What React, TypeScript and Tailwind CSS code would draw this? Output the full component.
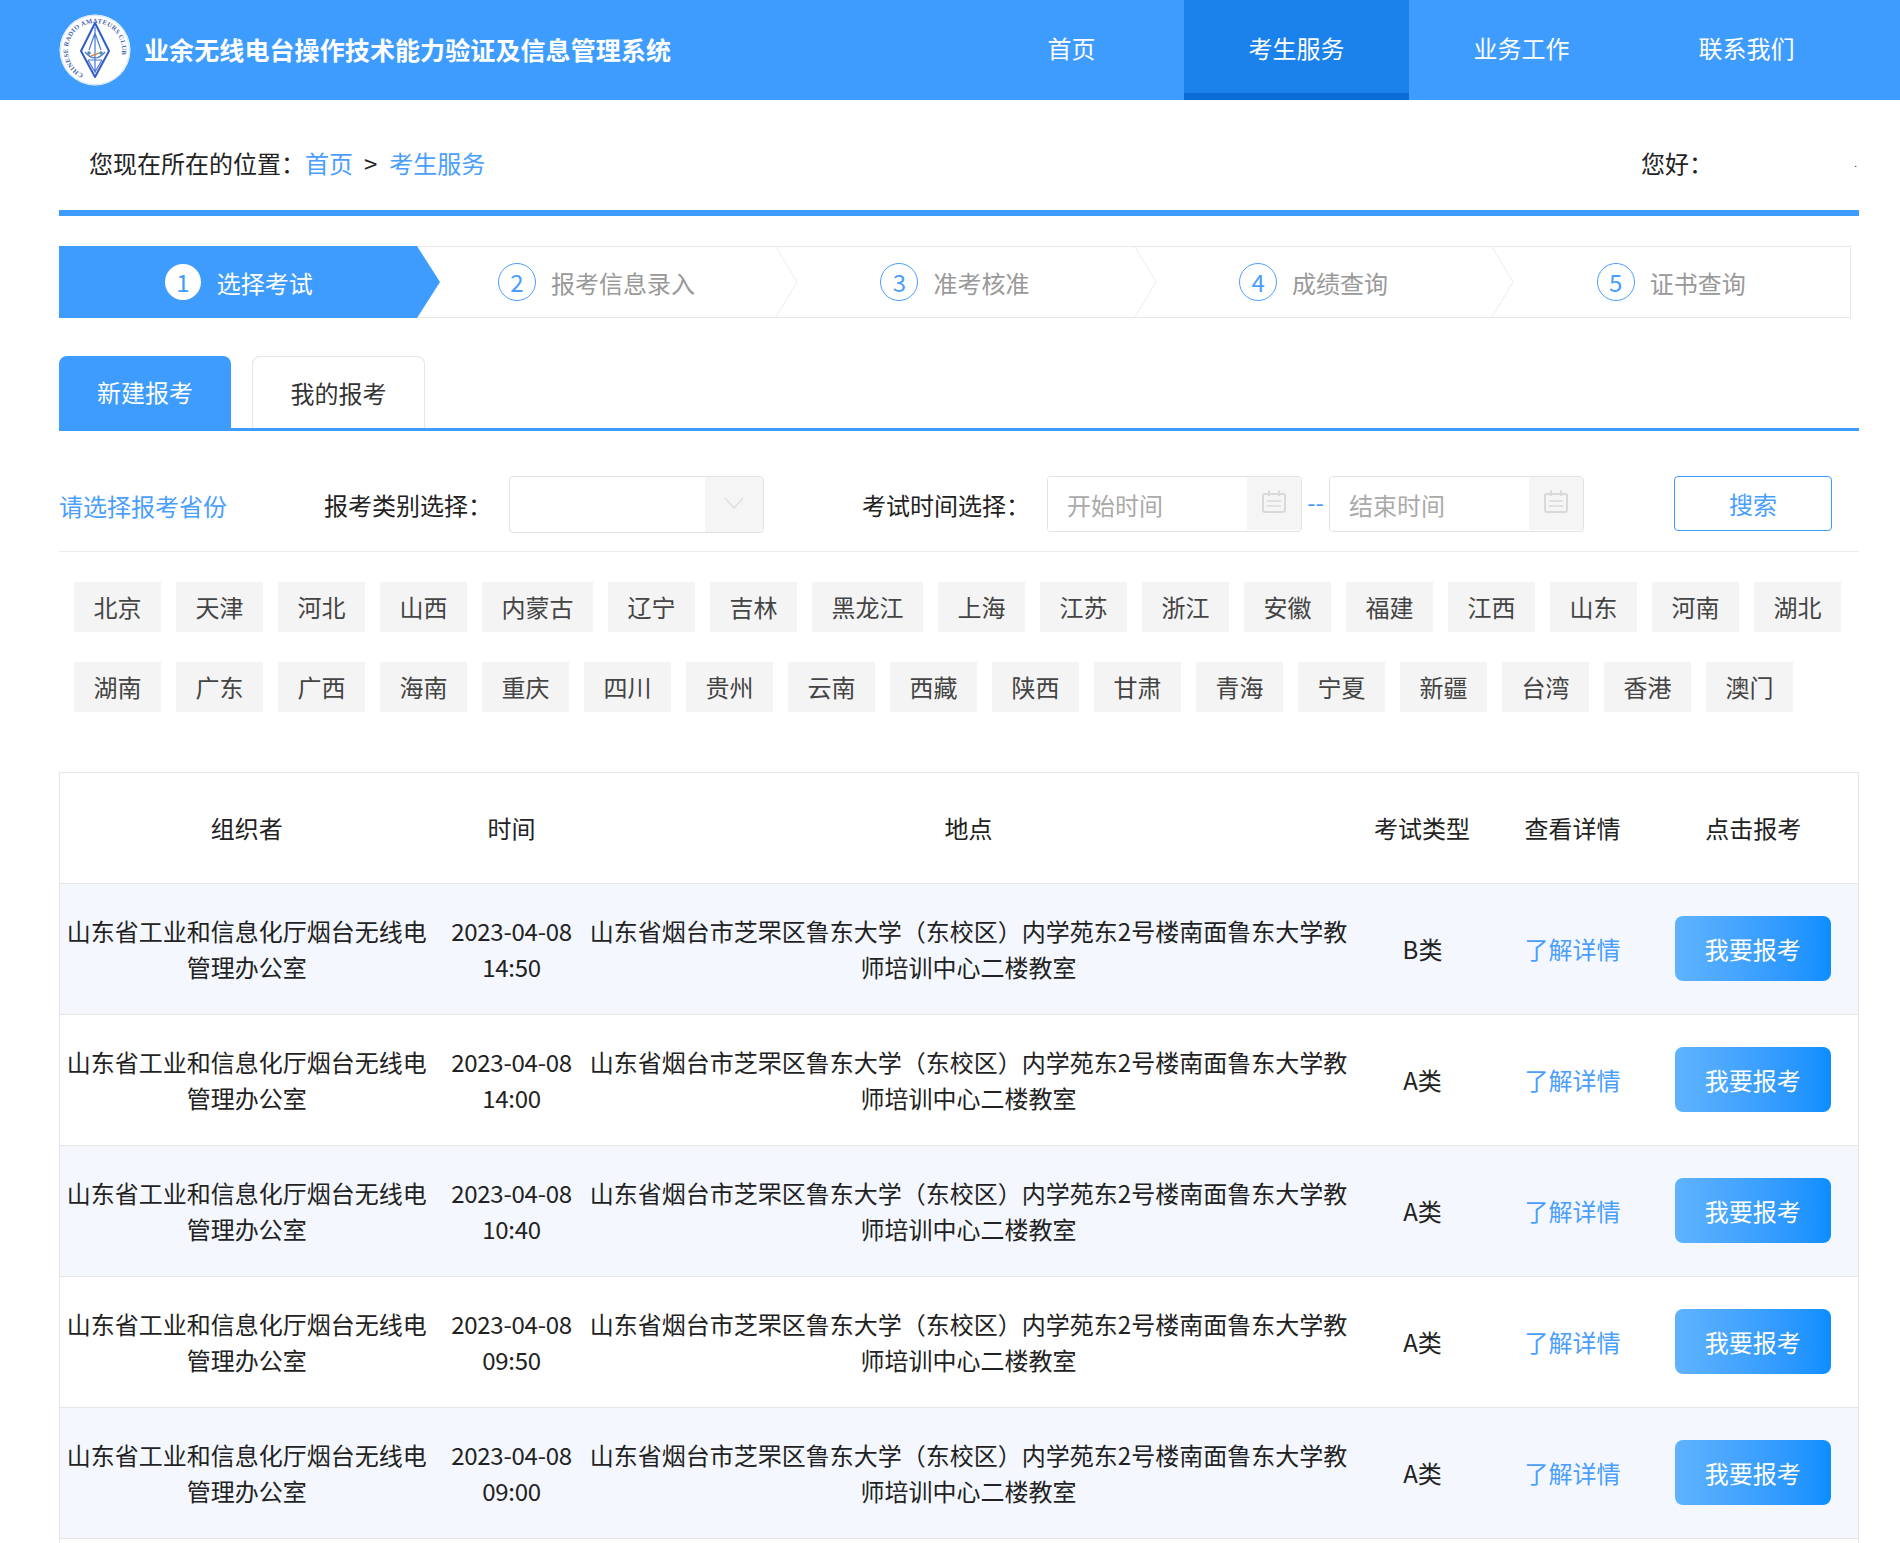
import React from 'react';

const steps = ['选择考试', '报考信息录入', '准考核准', '成绩查询', '证书查询'];

const provinces = [
  '北京', '天津', '河北', '山西', '内蒙古', '辽宁', '吉林', '黑龙江', '上海', '江苏', '浙江', '安徽', '福建', '江西', '山东', '河南', '湖北',
  '湖南', '广东', '广西', '海南', '重庆', '四川', '贵州', '云南', '西藏', '陕西', '甘肃', '青海', '宁夏', '新疆', '台湾', '香港', '澳门',
];

const exams = [
  { date: '2023-04-08', time: '14:50', type: 'B类' },
  { date: '2023-04-08', time: '14:00', type: 'A类' },
  { date: '2023-04-08', time: '10:40', type: 'A类' },
  { date: '2023-04-08', time: '09:50', type: 'A类' },
  { date: '2023-04-08', time: '09:00', type: 'A类' },
];

const Logo = () => (
  <svg width="72" height="72" viewBox="0 0 72 72" className="shrink-0">
    <circle cx="36" cy="36" r="35.5" fill="#ffffff" />
    <circle cx="36" cy="36" r="34.6" fill="none" stroke="#c4dcf7" strokeWidth="0.8" />
    <defs>
      <path id="ring" d="M 36 63 a 27 27 0 1 1 0 -54 a 27 27 0 1 1 0 54" />
    </defs>
    <text fontSize="6.6" fontWeight="700" fill="#3f64ad" fontFamily="'Liberation Serif', serif" letterSpacing="0.3">
      <textPath href="#ring" startOffset="7%">CHINESE RADIO AMATEURS CLUB</textPath>
    </text>
    <path d="M36 9 L50 37 L36 63 L22 37 Z" fill="#ffffff" stroke="#2f5cc8" strokeWidth="2" strokeLinejoin="round" />
    <path d="M36 13 V59 M30 36 L36 19 L42 36 M26 38 Q36 50 46 38 M29 46 L36 58 L43 46 M29 46 H43" fill="none" stroke="#4a78d8" strokeWidth="1.2" />
    <circle cx="30" cy="39" r="1.8" fill="#3f8fb8" />
    <circle cx="42" cy="39" r="1.8" fill="#3f8fb8" />
    <path d="M32 42 L40 39" stroke="#e08a4a" strokeWidth="1.6" />
  </svg>
);

const CalendarIcon = () => (
  <svg width="24" height="23" viewBox="0 0 24 23" fill="none" stroke="#d9d9d9" strokeWidth="2">
    <rect x="1" y="4" width="22" height="18" rx="2" />
    <path d="M7 0.5V6M17 0.5V6" />
    <path d="M5 11H19M5 16H19" strokeWidth="1.5" />
  </svg>
);

const DateInput = ({ placeholder }: { placeholder: string }) => (
  <div className="flex h-[56px] w-[255px] overflow-hidden rounded-[4px] border border-[#e2e2e2] bg-white">
    <input
      readOnly
      placeholder={placeholder}
      className="w-[199px] bg-white pl-[19px] pt-[1px] text-[24px] outline-none placeholder:text-[#aaaaaa]"
    />
    <div className="flex h-[53px] flex-1 justify-center bg-[#f5f5f5] pt-[13px]">
      <CalendarIcon />
    </div>
  </div>
);

const App: React.FC = () => {
  return (
    <div className="h-[1543px] overflow-hidden bg-white text-[24px] leading-[36px] text-[#222222] [font-family:'Noto_Sans_CJK_SC',sans-serif]">
      {/* Header */}
      <header className="h-[100px] bg-[#3e9cff]">
        <div className="ml-[59px] flex h-full w-[1800px] items-center justify-between">
          <div className="flex items-center">
            <Logo />
            <span className="ml-[13px] whitespace-nowrap pb-[2px] text-[25px] font-bold tracking-[0.1px] text-white">
              业余无线电台操作技术能力验证及信息管理系统
            </span>
          </div>
          <nav className="flex h-full">
            {['首页', '考生服务', '业务工作', '联系我们'].map(item => (
              <a
                key={item}
                className={
                  item === '考生服务'
                    ? 'flex w-[225px] items-center justify-center border-b-[7px] border-[#0a6cd6] bg-[#1a82ea] pt-[2px] text-white'
                    : 'flex w-[225px] items-center justify-center pb-[5px] text-white'
                }
              >
                {item}
              </a>
            ))}
          </nav>
        </div>
      </header>

      <main className="ml-[59px] w-[1800px]">
        {/* Breadcrumb */}
        <div className="flex h-[116px] items-center justify-between border-b-[6px] border-[#3e9cff] pl-[30px] pr-[2px] pt-[16px]">
          <div className="flex items-center">
            <span>您现在所在的位置：</span>
            <a className="text-[#4a9eff]">首页</a>
            <span className="mx-[11px]">&gt;</span>
            <a className="ml-[1px] text-[#4a9eff]">考生服务</a>
          </div>
          <div className="flex w-[216px] items-center justify-between">
            <span>您好：</span>
            <span className="text-[10px]">.</span>
          </div>
        </div>

        {/* Steps */}
        <div className="mt-[30px] flex h-[72px] w-[1792px] border-y border-[#e8e8e8]">
          {steps.map((step, index) => (
            <div
              key={step}
              className={
                index === 4
                  ? 'relative flex flex-1 items-center justify-center border-r border-[#e8e8e8]'
                  : index === 0
                    ? 'relative flex flex-1 items-center justify-center pl-[1px]'
                    : index === 3
                      ? 'relative flex flex-1 items-center justify-center'
                      : 'relative flex flex-1 items-center justify-center pr-[1px]'
              }
            >
              {index === 0 ? (
                <div className="absolute -inset-y-px left-0 w-[381px] bg-[#3e9cff] [clip-path:polygon(0_0,358px_0,381px_50%,358px_100%,0_100%)]" />
              ) : null}
              {index > 0 && index < 4 ? (
                <svg width="23" height="72" viewBox="0 0 23 72" fill="none" className="absolute -top-px left-full z-10 -ml-px">
                  <path d="M0.5 0 L22 36 L0.5 72" stroke="#ececec" strokeWidth="1" />
                </svg>
              ) : null}
              <span
                className={
                  index === 0
                    ? 'relative flex h-[36px] w-[36px] items-center justify-center rounded-full bg-white text-[#3e9cff]'
                    : 'relative flex h-[38px] w-[38px] items-center justify-center rounded-full border border-[#4a9eff] text-[#4a9eff]'
                }
              >
                {index + 1}
              </span>
              <span className={index === 0 ? 'relative ml-[16px] pt-[2px] text-white' : 'relative ml-[15px] pt-[2px] text-[#999999]'}>{step}</span>
            </div>
          ))}
        </div>

        {/* Tabs */}
        <div className="mt-[38px] flex gap-[21px] border-b-[3px] border-[#3e9cff]">
          <button className="h-[72px] w-[172px] rounded-t-[8px] bg-[#3e9cff] text-white">新建报考</button>
          <button className="h-[72px] w-[173px] rounded-t-[8px] border border-b-0 border-[#e5e5e5] bg-white text-[#333333]">
            我的报考
          </button>
        </div>

        {/* Filters */}
        <div className="mt-[45px] flex items-start border-b border-[#ececec] pb-[18px]">
          <a className="mt-[12px] w-[168px] text-[#4a9eff]">请选择报考省份</a>
          <span className="ml-[97px] mt-[11px] w-[168px]">报考类别选择：</span>
          <div className="ml-[17px] flex h-[57px] w-[255px] overflow-hidden rounded-[4px] border border-[#e2e2e2]">
            <div className="flex-1" />
            <div className="flex w-[58px] items-center justify-center bg-[#f5f5f5] pb-[4px]">
              <svg width="20" height="12" viewBox="0 0 20 12" fill="none" stroke="#dddddd" strokeWidth="1.2">
                <path d="M1 1 L10 11 L19 1" />
              </svg>
            </div>
          </div>
          <span className="ml-[98px] mt-[11px] w-[168px]">考试时间选择：</span>
          <div className="ml-[17px]">
            <DateInput placeholder="开始时间" />
          </div>
          <span className="w-[27px] pt-[8px] text-center text-[24px] text-[#3e9cff]">--</span>
          <DateInput placeholder="结束时间" />
          <button className="ml-[90px] h-[55px] w-[158px] rounded-[4px] border border-[#3e9cff] text-[#4a9eff]">搜索</button>
        </div>

        {/* Provinces */}
        <div className="mt-[30px] flex flex-wrap gap-x-[15px] gap-y-[30px] pl-[15px]">
          {provinces.map(name => (
            <a key={name} className="flex h-[50px] items-center bg-[#f4f4f4] px-[19.5px] text-[#444444]">
              {name}
            </a>
          ))}
        </div>

        {/* Exams */}
        <table className="mt-[60px] w-full table-fixed border-collapse border border-[#e5e5e5]">
          <thead>
            <tr className="h-[111px] border-b border-[#e5e5e5]">
              <th className="w-[374px] font-normal">组织者</th>
              <th className="w-[156px] font-normal">时间</th>
              <th className="w-[758px] font-normal">地点</th>
              <th className="w-[149px] font-normal">考试类型</th>
              <th className="w-[152px] font-normal">查看详情</th>
              <th className="font-normal">点击报考</th>
            </tr>
          </thead>
          <tbody>
            {exams.map((exam, index) => (
              <tr key={exam.time} className={index % 2 === 0 ? 'h-[131px] border-b border-[#e5e5e5] bg-[#f4f8fe]' : 'h-[131px] border-b border-[#e5e5e5] bg-white'}>
                <td className="text-center">山东省工业和信息化厅烟台无线电管理办公室</td>
                <td className="text-center tracking-[-0.25px]">
                  {exam.date}
                  <br />
                  {exam.time}
                </td>
                <td className="text-center">山东省烟台市芝罘区鲁东大学（东校区）内学苑东2号楼南面鲁东大学教师培训中心二楼教室</td>
                <td className="pl-[1px] text-center">{exam.type}</td>
                <td className="text-center text-[#4a9eff]">了解详情</td>
                <td className="text-center">
                  <button className="mb-[2px] mr-[1px] h-[65px] w-[156px] rounded-[8px] bg-gradient-to-r from-[#5fb3fd] to-[#0a8eff] pt-[2px] text-white">我要报考</button>
                </td>
              </tr>
            ))}
          </tbody>
        </table>
        <div className="h-[10px] border-x border-[#e5e5e5]" />
      </main>
    </div>
  );
};

export default App;
